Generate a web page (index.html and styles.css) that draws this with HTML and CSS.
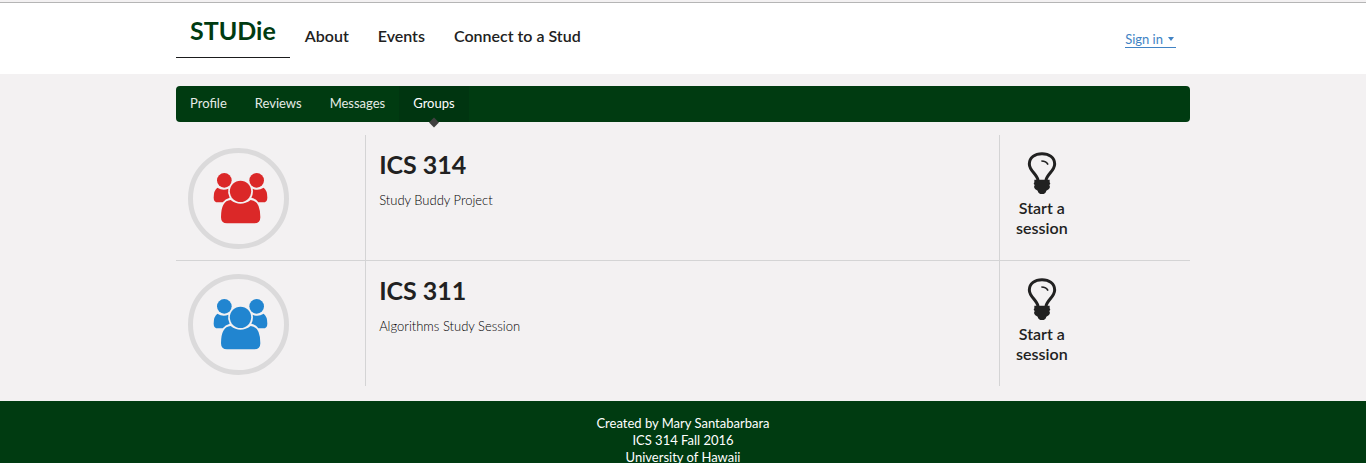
FILE: index.html
```html
<!DOCTYPE html>
<html lang="en">
<head>
<meta charset="utf-8">
<meta name="viewport" content="width=device-width, initial-scale=1">
<title>STUDie - Groups</title>
<link rel="stylesheet" href="styles.css">
</head>
<body>
<svg class="symbols" aria-hidden="true">
  <symbol id="group" viewBox="0 0 303 303">
    <circle class="ring" cx="151.500" cy="151.500" r="144"/>
    <circle cx="109" cy="97" r="22"/>
    <circle cx="206" cy="97" r="22"/>
    <circle cx="157.500" cy="130" r="32"/>
    <path d="M88 119Q105 130 121 122Q118 136 125 149Q112 152 104 163H90Q77 163 77 149Q77 127 88 119Z"/>
    <path d="M227 119Q210 130 194 122Q197 136 190 149Q203 152 211 163H225Q238 163 238 149Q238 127 227 119Z"/>
    <path d="M128 156Q157 179 188 156Q217 158 217 208Q217 226 199 226H117Q99 226 99 208Q99 158 128 156Z"/>
  </symbol>
  <symbol id="bulb" viewBox="0 0 90 132">
    <path class="glass" d="M33 88C31 70 7 60 7 39C7 19 24 8 45 8S83 19 83 39C83 60 59 70 57 88"/>
    <path class="shine" d="M43 30Q58 30 63 41"/>
    <path d="M22 86H68V94L70 98L67 102L69 108L66 114L58 119Q56 129 45 129Q34 129 32 119L24 114L21 108L23 102L20 98L22 94Z"/>
  </symbol>
</svg>
<header class="masthead">
  <nav class="container masthead-nav" aria-label="Main">
    <a class="brand" href="#">STUDie</a>
    <a class="main-link" href="#">About</a>
    <a class="main-link" href="#">Events</a>
    <a class="main-link" href="#">Connect to a Stud</a>
    <a class="sign-in" href="#">Sign in<span class="caret"></span></a>
  </nav>
</header>
<main class="container content">
  <nav class="tabs" aria-label="Account">
    <a class="tab" href="#">Profile</a>
    <a class="tab" href="#">Reviews</a>
    <a class="tab" href="#">Messages</a>
    <a class="tab active" href="#" aria-current="page">Groups</a>
  </nav>
  <section class="groups">
    <article class="group">
      <div class="cell"><svg class="group-icon red" aria-hidden="true"><use href="#group"/></svg></div>
      <div class="cell"><h1 class="title">ICS 314</h1><p class="description">Study Buddy Project</p></div>
      <div class="cell"><button class="start" type="button"><svg class="bulb" aria-hidden="true"><use href="#bulb"/></svg>Start a session</button></div>
    </article>
    <article class="group">
      <div class="cell"><svg class="group-icon blue" aria-hidden="true"><use href="#group"/></svg></div>
      <div class="cell"><h1 class="title">ICS 311</h1><p class="description">Algorithms Study Session</p></div>
      <div class="cell"><button class="start" type="button"><svg class="bulb" aria-hidden="true"><use href="#bulb"/></svg>Start a session</button></div>
    </article>
  </section>
</main>
<footer class="footer">
  <div>Created by Mary Santabarbara</div>
  <div>ICS 314 Fall 2016</div>
  <div>University of Hawaii</div>
</footer>
</body>
</html>
```
FILE: styles.css
```css
* { box-sizing: border-box; }
body {
  margin: 0;
  background: #f3f1f2;
  color: #212121;
  font: 13px/17px Lato, sans-serif;
}
a { color: inherit; text-decoration: none; }
.symbols { position: absolute; width: 0; height: 0; }
.container { width: 100%; max-width: 1014px; margin: 0 auto; }
.masthead {
  margin-top: 2px;
  border-top: 1px solid #b5b5b5;
  background: #fff;
  padding-bottom: 16px;
}
.masthead-nav { display: flex; align-items: center; }
.brand {
  padding: 12px 14px;
  border-bottom: 1px solid #1b1c1d;
  color: #003b11;
  font-size: 25px;
  font-weight: 700;
  line-height: 30px;
}
.main-link {
  padding: 11px 15px 0;
  font-size: 16px;
  font-weight: 600;
  line-height: 20px;
}
.main-link + .main-link { padding-left: 14px; }
.sign-in {
  margin: 18px 14px 0 auto;
  border-bottom: 1px solid #4183c4;
  color: #4183c4;
  line-height: 15px;
}
.caret {
  display: inline-block;
  margin: 0 2px 3px 5px;
  border: 3px solid transparent;
  border-top: 4px solid #4183c4;
  border-bottom: 0;
}
.content { padding: 12px 0 15px; }
.tabs {
  display: flex;
  border-radius: 4px;
  background: #003b11;
  color: #e6ebe7;
}
.tab { position: relative; padding: 9px 14px 10px; }
.active { background: #003510; color: #fff; }
.active::after {
  content: "";
  position: absolute;
  bottom: -4px;
  left: 50%;
  width: 7px;
  height: 7px;
  background: #404040;
  transform: translateX(-50%) rotate(45deg);
}
.groups { margin-top: 13px; }
.group { display: grid; grid-template-columns: 3fr 10fr 3fr; }
.group + .group { border-top: 1px solid #d4d4d5; }
.cell { padding: 13px 13px 11px; }
.cell + .cell { box-shadow: -1px 0 #d4d4d5; }
.group-icon { display: block; width: 101px; height: 101px; margin-left: -1px; }
.ring { fill: none; stroke: #dbdadb; stroke-width: 15px; }
.red { fill: #db2828; }
.blue { fill: #2185d0; }
.title { margin: 0; font-size: 25px; line-height: 32px; }
.description { margin: 12px 0 0; color: #000; font-weight: 300; }
.start {
  width: 58px;
  padding: 0;
  border: 0;
  background: none;
  color: #212121;
  font: 600 16px/20px Lato, sans-serif;
}
.bulb { display: block; width: 30px; height: 44px; margin: 3px auto; fill: #212121; }
.glass, .shine { fill: none; stroke: #212121; stroke-width: 9px; }
.shine { stroke-width: 5px; }
.footer {
  padding: 14px 14px 16px;
  background: #003b11;
  color: #fff;
  text-align: center;
}
```
